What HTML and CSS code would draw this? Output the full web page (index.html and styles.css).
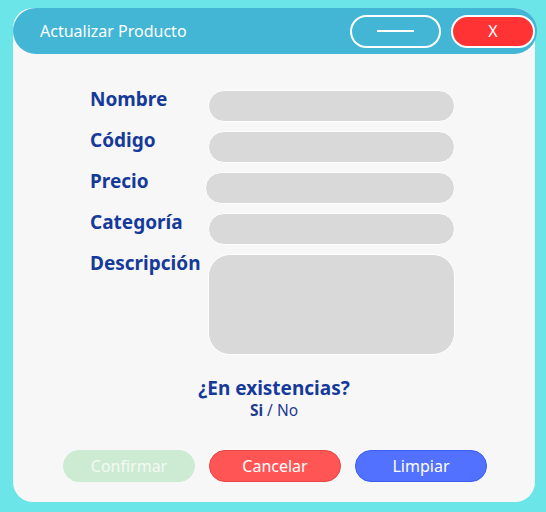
FILE: index.html
```html
<!DOCTYPE html>
<html lang="es">
<head>
<meta charset="utf-8">
<title>Actualizar Producto</title>
<link rel="stylesheet" href="styles.css">
</head>
<body>
<div class="window">
  <header class="titlebar">
    <span class="title">Actualizar Producto</span>
    <div class="controls">
      <button class="ctrl ctrl-min" aria-label="Minimizar"><span class="min-line"></span></button>
      <button class="ctrl ctrl-close">X</button>
    </div>
  </header>
  <main class="content">
    <form class="form">
      <div class="row">
        <label class="label">Nombre</label>
        <div class="field"></div>
      </div>
      <div class="row">
        <label class="label">Código</label>
        <div class="field"></div>
      </div>
      <div class="row">
        <label class="label">Precio</label>
        <div class="field field-shift"></div>
      </div>
      <div class="row">
        <label class="label">Categoría</label>
        <div class="field"></div>
      </div>
      <div class="row">
        <label class="label">Descripción</label>
        <div class="field field-area"></div>
      </div>
    </form>
    <div class="stock">
      <div class="question">¿En existencias?</div>
      <div class="answer"><b>Si</b> / No</div>
    </div>
    <div class="actions">
      <button class="btn btn-confirm">Confirmar</button>
      <button class="btn btn-cancel">Cancelar</button>
      <button class="btn btn-clear">Limpiar</button>
    </div>
  </main>
</div>
</body>
</html>
```
FILE: styles.css
```css
* { box-sizing: border-box; }

html, body {
  margin: 0;
  padding: 0;
}

body {
  background: #6ce5e8;
  font-family: "Noto Sans", "Open Sans", sans-serif;
  width: 546px;
  height: 512px;
  overflow: hidden;
  padding: 8px 11px 0 13px;
}

.window {
  width: 522px;
  background: #f7f7f7;
  border-radius: 20px;
  display: flex;
  flex-direction: column;
}

.titlebar {
  height: 46px;
  margin-right: -2px;
  background: #42b6d4;
  border-radius: 23px;
  display: flex;
  align-items: center;
  justify-content: space-between;
  padding: 0 2px 0 27px;
}

.title {
  color: #ffffff;
  font-size: 16px;
}

.controls {
  display: flex;
  gap: 10px;
  align-items: center;
}

.ctrl {
  height: 33px;
  border: 2px solid #ffffff;
  border-radius: 17px;
  font-family: inherit;
  padding: 0;
  display: flex;
  align-items: center;
  justify-content: center;
}

.ctrl-min {
  width: 91px;
  background: transparent;
}

.min-line {
  width: 37px;
  height: 2px;
  background: #ffffff;
}

.ctrl-close {
  width: 84px;
  background: #ff3333;
  color: #ffffff;
  font-size: 16px;
}

.content {
  padding: 36px 80px 20px 77px;
  display: flex;
  flex-direction: column;
}

.form {
  display: flex;
  flex-direction: column;
  gap: 9px;
}

.row {
  display: grid;
  grid-template-columns: 118px 247px;
  align-items: start;
}

.label {
  color: #163a9a;
  font-weight: 700;
  font-size: 19px;
  line-height: 19px;
  white-space: nowrap;
}

.field {
  height: 32px;
  background: #d9d9d9;
  border: 1.5px solid #ffffff;
  border-radius: 16px;
}

.field-shift {
  margin-left: -3px;
}

.field-area {
  height: 101px;
  border-radius: 22px;
}

.stock {
  margin-top: 21px;
  text-align: center;
  padding-left: 3px;
}

.question {
  color: #163a9a;
  font-weight: 700;
  font-size: 19px;
  line-height: 24px;
}

.answer {
  color: #1f3a8f;
  font-size: 15.5px;
  line-height: 20px;
}

.answer b {
  font-weight: 700;
}

.actions {
  margin-top: 30px;
  display: flex;
  justify-content: center;
  gap: 14px;
  margin-left: -40px;
  margin-right: -45px;
}

.btn {
  flex: 0 0 132px;
  height: 32px;
  border-radius: 16px;
  font-family: inherit;
  font-size: 16px;
  color: #ffffff;
  padding: 0;
  border: 1px solid transparent;
}

.btn-confirm {
  background: #cdebd3;
  border-color: #cdebd3;
  color: #f2faf3;
}

.btn-cancel {
  background: #ff5555;
  border-color: #e84545;
}

.btn-clear {
  background: #5271ff;
  border-color: #3d5cf0;
}
```
